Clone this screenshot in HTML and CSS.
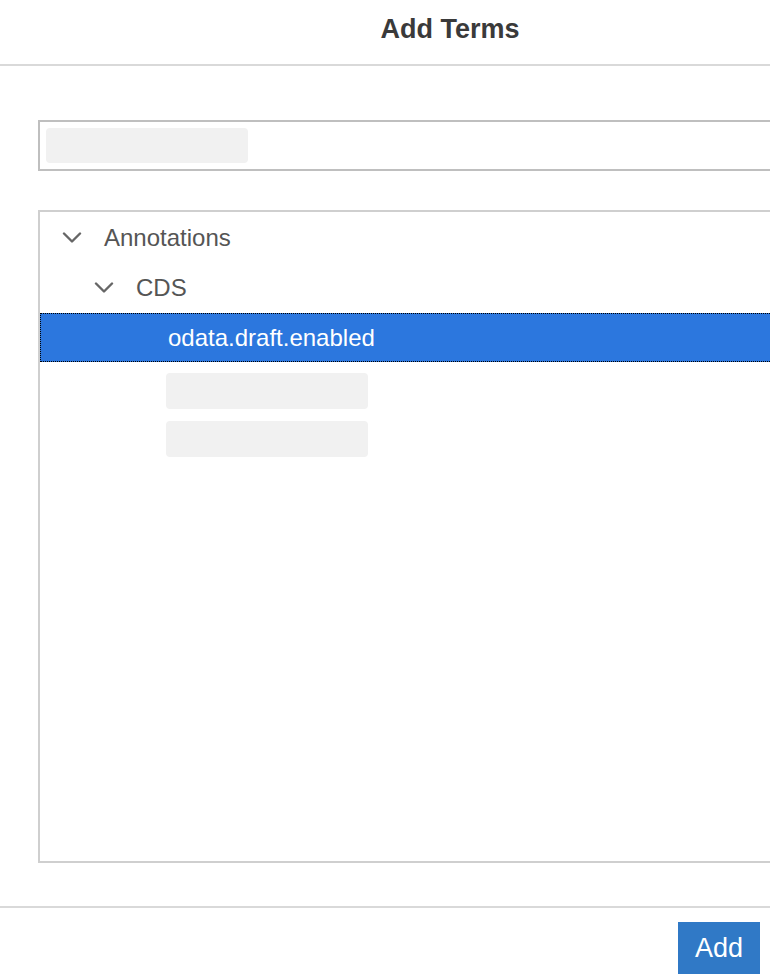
FILE: index.html
```html
<!DOCTYPE html>
<html lang="en">
<head>
<meta charset="utf-8">
<title>Add Terms</title>
<link rel="stylesheet" href="styles.css">
</head>
<body>
<div class="viewport">
<div class="dialog">
  <header class="dlg-header">
    <h1 class="dlg-title">Add Terms</h1>
  </header>
  <main class="dlg-content">
    <div class="search">
      <div class="skeleton skeleton-search"></div>
    </div>
    <div class="tree">
      <div class="row lvl1">
        <svg class="chev" width="20" height="12" viewBox="0 0 20 12"><path d="M2 1.5 L10 9.5 L18 1.5" fill="none" stroke="#666" stroke-width="2.4" stroke-linecap="round" stroke-linejoin="round"/></svg>
        <span class="label">Annotations</span>
      </div>
      <div class="row lvl2">
        <svg class="chev" width="20" height="12" viewBox="0 0 20 12"><path d="M2 1.5 L10 9.5 L18 1.5" fill="none" stroke="#666" stroke-width="2.4" stroke-linecap="round" stroke-linejoin="round"/></svg>
        <span class="label">CDS</span>
      </div>
      <div class="row lvl3 selected">
        <span class="label">odata.draft.enabled</span>
      </div>
      <div class="skeletons">
        <div class="skeleton skeleton-item"></div>
        <div class="skeleton skeleton-item"></div>
      </div>
    </div>
  </main>
  <footer class="dlg-footer">
    <div class="footer-inner">
      <button class="btn-add" type="button">Add</button>
    </div>
  </footer>
</div>
</div>
</body>
</html>
```
FILE: styles.css
```css
html, body {
  margin: 0;
  padding: 0;
  background: #fff;
}
body {
  font-family: "Liberation Sans", Arial, sans-serif;
}
.viewport {
  width: 770px;
  height: 978px;
  overflow: hidden;
}
.dialog {
  width: 900px;
  display: flex;
  flex-direction: column;
}
.dlg-header {
  height: 64px;
  border-bottom: 2px solid #d9d9d9;
  display: flex;
  align-items: center;
  justify-content: center;
}
.dlg-title {
  margin: 0;
  font-size: 27px;
  font-weight: bold;
  color: #3a3a3a;
  position: relative;
  top: -3px;
}
.dlg-content {
  padding: 54px 38px 0 38px;
  display: flex;
  flex-direction: column;
}
.search {
  height: 51px;
  box-sizing: border-box;
  border: 2px solid #bfbfbf;
  padding: 6px;
  display: flex;
}
.skeleton {
  background: #f1f1f1;
  border-radius: 4px;
}
.skeleton-search {
  width: 202px;
  height: 35px;
}
.tree {
  margin-top: 39px;
  height: 653px;
  box-sizing: border-box;
  border: 2px solid #cfcfcf;
  display: flex;
  flex-direction: column;
  padding-top: 1px;
}
.row {
  height: 50px;
  box-sizing: border-box;
  display: flex;
  align-items: center;
  font-size: 24px;
  color: #555;
}
.row .chev {
  flex: none;
  margin-right: 22px;
}
.lvl1 { padding-left: 22px; }
.lvl2 { padding-left: 54px; }
.lvl3 { padding-left: 128px; }
.row.selected {
  background: #2c77de;
  color: #fff;
  border: 1px dotted #000;
  height: 49px;
  padding-left: 127px;
}
.skeletons {
  display: flex;
  flex-direction: column;
  gap: 12px;
  padding: 11px 0 0 126px;
}
.skeleton-item {
  width: 202px;
  height: 36px;
}
.dlg-footer {
  margin-top: 43px;
  border-top: 2px solid #d9d9d9;
}
.footer-inner {
  width: 770px;
  box-sizing: border-box;
  display: flex;
  justify-content: flex-end;
  padding: 14px 10px 0 0;
}
.btn-add {
  width: 82px;
  height: 52px;
  border: none;
  border-radius: 0;
  background: #3079c6;
  color: #fff;
  font-family: "Liberation Sans", Arial, sans-serif;
  font-size: 27px;
  padding: 0;
}
```
